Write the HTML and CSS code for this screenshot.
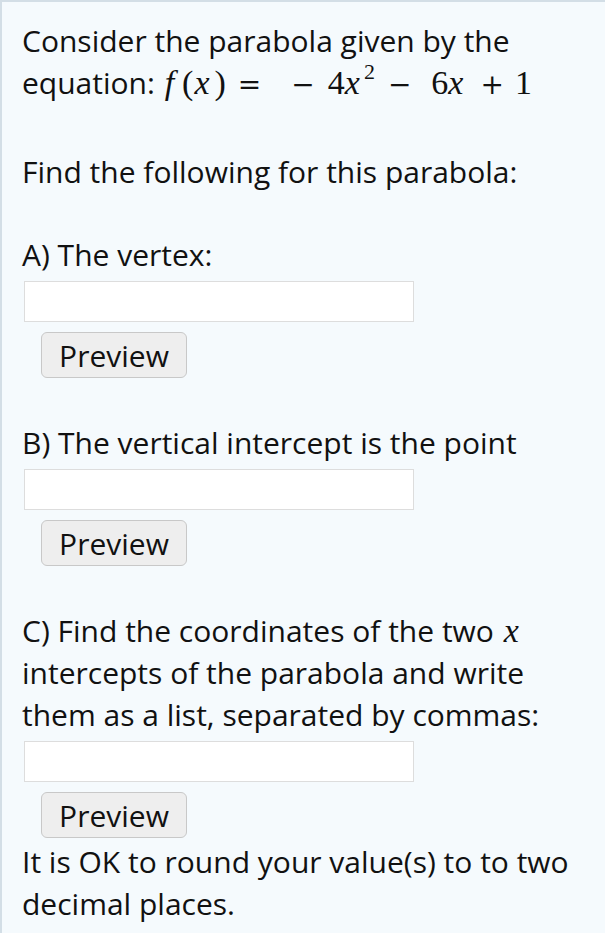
FILE: index.html
```html
<!DOCTYPE html>
<html>
<head>
<meta charset="utf-8">
<link rel="stylesheet" href="styles.css">
</head>
<body>
<div class="question">
  <p class="intro">Consider the parabola given by the equation: <span class="math"><i class="fn">f</i><span class="lp">(</span><i class="x1">x</i><span class="rp">)</span><span class="op eq">=</span><span class="op neg">−</span><span class="d4">4</span><i>x</i><sup>2</sup><span class="op m2">−</span><span class="d6">6</span><i>x</i><span class="op plus">+</span><span>1</span></span></p>
  <p class="find">Find the following for this parabola:</p>

  <p class="part-a">A) The vertex:</p>
  <input class="answer" type="text">
  <button class="preview">Preview</button>

  <p class="part">B) The vertical intercept is the point</p>
  <input class="answer" type="text">
  <button class="preview">Preview</button>

  <p class="part">C) Find the coordinates of the two <span class="math"><i>x</i></span> intercepts of the parabola and write them as a list, separated by commas:</p>
  <input class="answer" type="text">
  <button class="preview">Preview</button>
  <p class="note">It is OK to round your value(s) to to two decimal places.</p>
</div>
</body>
</html>
```
FILE: styles.css
```css
html, body {
  margin: 0;
  padding: 0;
  background: #f5fafd;
}
.question {
  box-sizing: border-box;
  width: 605px;
  min-height: 933px;
  border-top: 2px solid #d3dee6;
  border-left: 2px solid #d3dee6;
  padding: 18px 20px 0 20px;
  font-family: "Open Sans", sans-serif;
  font-size: 30px;
  line-height: 42px;
  color: #111;
}
p {
  margin: 0;
  width: 565px;
}
.intro {
  width: 520px;
}
.find {
  margin-top: 45px;
}
.part-a {
  margin-top: 41px;
}
.part {
  margin-top: 44px;
}
.math {
  font-family: "Liberation Serif", "DejaVu Serif", serif;
  font-size: 34px;
  margin-left: 2px;
}
.math i {
  font-style: italic;
}
.fn {
  margin-right: 8px;
}
.lp {
  margin-right: 1px;
}
.x1 {
  margin-right: 5px;
}
.op {
  font-family: "DejaVu Serif", serif;
  font-size: 28px;
}
.eq {
  margin: 0 30px 0 12px;
}
.neg {
  margin-right: 13px;
}
.m2 {
  margin: 0 20px 0 13px;
}
.plus {
  margin: 0 11px 0 17px;
}
.math sup {
  font-size: 22px;
  line-height: 0;
  vertical-align: 15px;
  margin-left: 4px;
}
.answer {
  display: block;
  box-sizing: border-box;
  width: 390px;
  height: 41px;
  margin: 5px 0 0 2px;
  border: 1px solid #ddd;
  background: #fff;
  padding: 0;
}
.preview {
  display: block;
  box-sizing: border-box;
  width: 146px;
  height: 46px;
  margin: 10px 0 0 19px;
  padding: 0;
  font-family: "Open Sans", sans-serif;
  font-size: 30px;
  color: #111;
  background: #eeeeee;
  border: 1.5px solid #c8c8c8;
  border-radius: 6px;
}
.note {
  margin-top: 3px;
}
```
